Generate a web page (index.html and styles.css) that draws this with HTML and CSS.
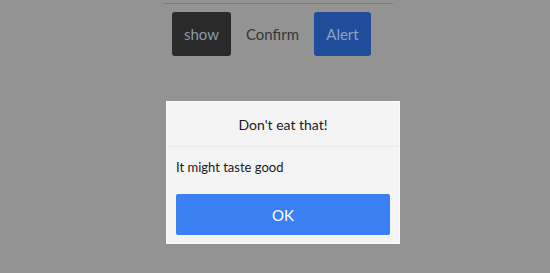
FILE: index.html
```html
<!DOCTYPE html>
<html>
<head>
<meta charset="utf-8">
<link rel="stylesheet" href="styles.css">
</head>
<body>
<div class="page">
  <div class="toolbar">
    <button class="btn btn-dark">show</button>
    <button class="btn btn-plain">Confirm</button>
    <button class="btn btn-blue">Alert</button>
  </div>
</div>
<div class="overlay">
  <div class="modal">
    <div class="modal-header">Don't eat that!</div>
    <div class="modal-body">It might taste good</div>
    <div class="modal-footer"><button class="ok">OK</button></div>
  </div>
</div>
</body>
</html>
```
FILE: styles.css
```css
html, body {
  margin: 0;
  padding: 0;
  height: 100%;
}
body {
  background: #939393;
  font-family: Lato, "Open Sans", sans-serif;
}
.page {
  padding-top: 3px;
}
.toolbar {
  box-sizing: border-box;
  margin-left: 163px;
  width: 230px;
  border-top: 1px solid #7b7b7b;
  padding-top: 8px;
  padding-left: 9px;
  display: flex;
  gap: 2px;
}
.btn {
  height: 44px;
  border: none;
  border-radius: 3px;
  font-family: inherit;
  font-size: 15px;
  padding: 0;
}
.btn-dark {
  width: 59px;
  background: #2a2a2a;
  color: #8e9aa8;
}
.btn-plain {
  width: 79px;
  background: transparent;
  color: #363636;
}
.btn-blue {
  width: 57px;
  background: #1f4d9b;
  color: #8ea2c2;
}
.overlay {
  position: fixed;
  inset: 0;
}
.modal {
  position: absolute;
  left: 166px;
  top: 101px;
  width: 234px;
  height: 143px;
  box-sizing: border-box;
  background: #f4f4f4;
  border: 1px solid #fafafa;
  display: flex;
  flex-direction: column;
}
.modal-header {
  height: 45px;
  box-sizing: border-box;
  border-bottom: 1px solid #e9e9e9;
  display: flex;
  align-items: center;
  justify-content: center;
  font-size: 14px;
  color: #1a1a1a;
}
.modal-body {
  padding: 12px 9px 0;
  font-size: 13px;
  color: #1a1a1a;
  height: 35px;
}
.modal-footer {
  padding: 0 9px;
}
.ok {
  width: 100%;
  height: 41px;
  border: none;
  border-radius: 2px;
  background: #3a80f2;
  color: #ffffff;
  font-family: inherit;
  font-size: 15px;
}
```
